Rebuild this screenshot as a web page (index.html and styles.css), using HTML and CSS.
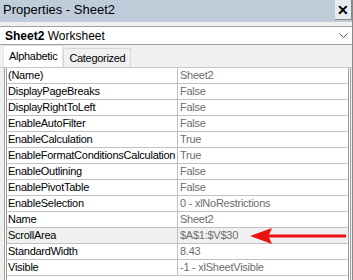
FILE: index.html
```html
<!DOCTYPE html>
<html lang="en">
<head>
  <meta charset="UTF-8" />
  <title>Properties - Sheet2</title>
  <link rel="stylesheet" href="styles.css">
</head>
<body>
  <div class="window">
    <header class="titlebar">
      <span class="title">Properties - Sheet2</span>
      <button class="close-button">&#x2715;</button>
    </header>
    <div class="object-select">
      <span><b>Sheet2</b> Worksheet</span>
      <svg class="chevron" width="9" height="6" viewBox="0 0 9 6"><path d="M0.5 0.5 L4.5 4.5 L8.5 0.5" fill="none" stroke="#555" stroke-width="1"/></svg>
    </div>
    <div class="tabs">
      <div class="tab active">Alphabetic</div>
      <div class="tab">Categorized</div>
    </div>
    <div class="grid">
      <div class="row"><div class="name">(Name)</div><div class="value">Sheet2</div></div>
      <div class="row"><div class="name">DisplayPageBreaks</div><div class="value">False</div></div>
      <div class="row"><div class="name">DisplayRightToLeft</div><div class="value">False</div></div>
      <div class="row"><div class="name">EnableAutoFilter</div><div class="value">False</div></div>
      <div class="row"><div class="name">EnableCalculation</div><div class="value">True</div></div>
      <div class="row"><div class="name">EnableFormatConditionsCalculation</div><div class="value">True</div></div>
      <div class="row"><div class="name">EnableOutlining</div><div class="value">False</div></div>
      <div class="row"><div class="name">EnablePivotTable</div><div class="value">False</div></div>
      <div class="row"><div class="name">EnableSelection</div><div class="value">0 - xlNoRestrictions</div></div>
      <div class="row"><div class="name">Name</div><div class="value">Sheet2</div></div>
      <div class="row selected">
        <div class="name">ScrollArea</div>
        <div class="value">$A$1:$V$30</div>
        <svg class="arrow" width="100" height="18" viewBox="0 0 100 18"><path d="M0 9 L22 1 L19 7.5 L96 7.5 L96 10.5 L19 10.5 L22 17 Z" fill="#ee1111"/></svg>
      </div>
      <div class="row"><div class="name">StandardWidth</div><div class="value">8.43</div></div>
      <div class="row"><div class="name">Visible</div><div class="value">-1 - xlSheetVisible</div></div>
    </div>
  </div>
</body>
</html>
```

FILE: styles.css
```css
* {
  margin: 0;
  padding: 0;
  box-sizing: border-box;
}
html, body {
  width: 353px;
  height: 280px;
  overflow: hidden;
}
body {
  font-family: 'Liberation Sans', sans-serif;
  font-size: 11px;
  background: #f0f0f0;
  color: #000;
}
.window {
  display: flex;
  flex-direction: column;
  height: 280px;
  border-right: 1px solid #8a8a8a;
}
.titlebar {
  height: 22px;
  background: #bfcddb;
  display: flex;
  justify-content: space-between;
  align-items: flex-start;
  padding-left: 3px;
}
.title {
  font-size: 13px;
  line-height: 20px;
}
.close-button {
  width: 17px;
  height: 20px;
  background: #e6ecf1;
  border: none;
  border-right: 1px solid #888;
  border-bottom: 1px solid #888;
  font-size: 14px;
  font-weight: bold;
  line-height: 18px;
  color: #000;
}
.object-select {
  margin-top: 4px;
  height: 19px;
  background: #fff;
  border-top: 1px solid #a0a0a0;
  border-bottom: 1px solid #a0a0a0;
  display: flex;
  align-items: center;
  justify-content: space-between;
  padding: 0 4px 0 5px;
  font-size: 12px;
}
.tabs {
  display: flex;
  align-items: flex-end;
  height: 23px;
  padding-left: 3px;
  border-bottom: 1px solid #c8c8c8;
}
.tab {
  font-size: 11px;
  letter-spacing: -0.3px;
  height: 19px;
  line-height: 18px;
  padding: 0 5px;
  border: 1px solid #d9d9d9;
  border-bottom: none;
  background: #f0f0f0;
}
.tab.active {
  background: #fff;
  height: 22px;
  line-height: 20px;
  padding: 0 5px;
  border-color: #e3e3e3;
}
.grid {
  margin: 0 1px 0 4px;
  border-left: 3px double #a0a0a0;
  border-right: 3px double #a0a0a0;
  background: #fff;
  flex: 1;
}
.row {
  display: grid;
  grid-template-columns: 171px 1fr;
  height: 16px;
  border-bottom: 1px solid #c0c0c0;
  position: relative;
  letter-spacing: -0.25px;
}
.row.selected {
  background: #f0f0f0;
}
.name {
  padding-left: 1px;
  line-height: 15px;
  white-space: nowrap;
  overflow: hidden;
  border-right: 1px solid #c0c0c0;
}
.value {
  padding-left: 2px;
  line-height: 15px;
  color: #6d6d6d;
  white-space: nowrap;
}
.arrow {
  position: absolute;
  left: 243px;
  top: -1px;
}
```
